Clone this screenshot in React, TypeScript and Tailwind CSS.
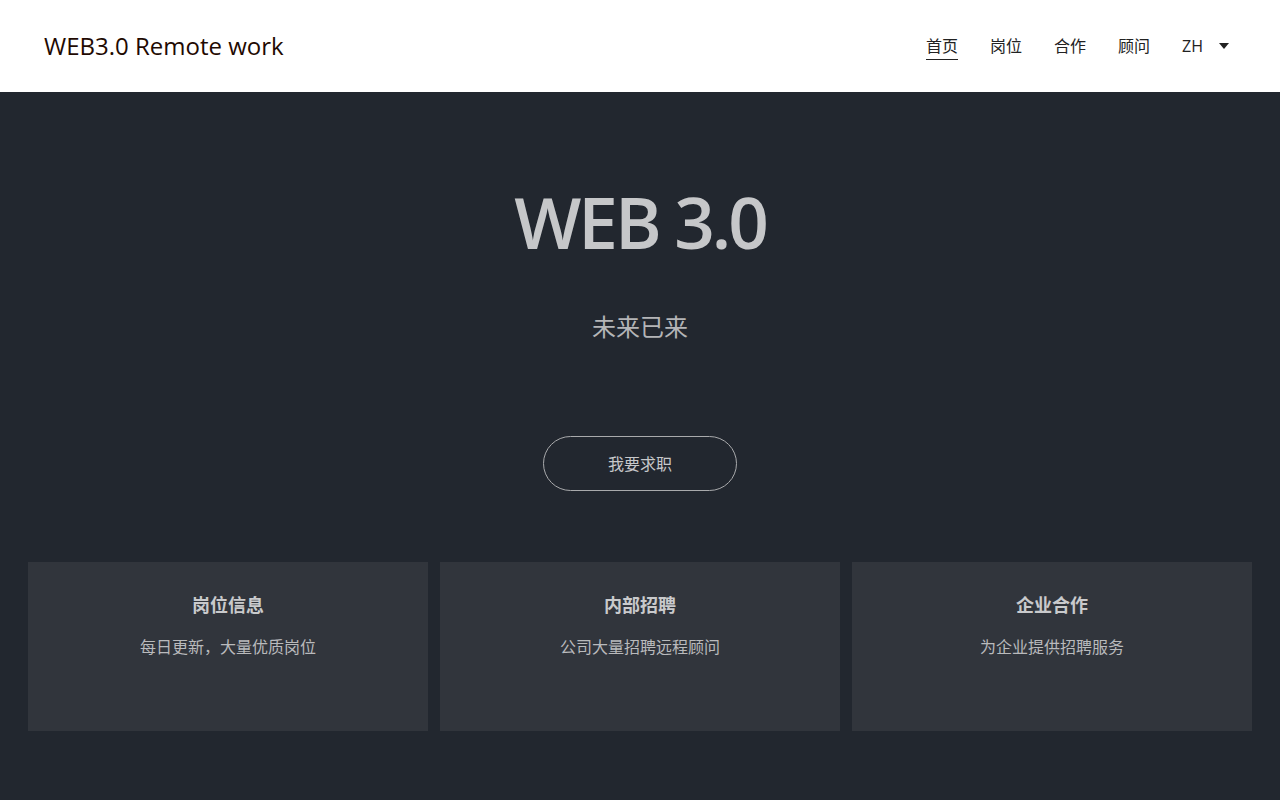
import React from 'react';

const navItems = ['首页', '岗位', '合作', '顾问'];

const cards = [
  { title: '岗位信息', desc: '每日更新，大量优质岗位' },
  { title: '内部招聘', desc: '公司大量招聘远程顾问' },
  { title: '企业合作', desc: '为企业提供招聘服务' },
];

const font = { fontFamily: '"Open Sans", "Noto Sans", "Noto Sans CJK SC", sans-serif' };

const Header = () => (
  <header className="h-[92px] bg-white flex items-center justify-between pl-[44px] pr-[51px]">
    <div className="text-[24px] text-[#1f0a02] leading-none">WEB3.0 Remote work</div>
    <nav className="flex items-center gap-8 text-[16px] text-[#222]">
      {navItems.map((item, i) => (
        <a key={item} className={`leading-none pb-[5px] border-b ${i === 0 ? 'border-[#222]' : 'border-transparent'} mt-[6px]`}>
          {item}
        </a>
      ))}
      <div className="flex items-center gap-[16px] leading-none pb-[5px] mt-[6px] border-b border-transparent">
        <span>ZH</span>
        <svg width="10" height="6" viewBox="0 0 10 6">
          <path d="M0 0h10L5 6z" fill="#222" />
        </svg>
      </div>
    </nav>
  </header>
);

const App = () => {
  return (
    <div className="min-h-[800px] bg-[#22272f] flex flex-col" style={font}>
      <Header />
      <main className="flex-1 flex flex-col items-center">
        <h1 className="mt-[94px] text-[71px] font-semibold leading-none text-[#c6c7c9] tracking-[-3px]">WEB 3.0</h1>
        <p className="mt-[58px] text-[24px] leading-none text-[#b4b5b7]">未来已来</p>
        <button className="mt-[97px] w-[194px] h-[55px] rounded-full border border-[#a9aaac] text-[16px] text-[#c7c8ca]">
          我要求职
        </button>
        <div className="mt-[71px] w-full px-[28px] grid grid-cols-3 gap-[12px]">
          {cards.map((c) => (
            <div key={c.title} className="h-[169px] bg-[#31353c] flex flex-col items-center pt-[34px]">
              <div className="text-[18px] font-bold text-[#c9cacc] leading-none">{c.title}</div>
              <div className="mt-[25px] text-[16px] text-[#b9babc] leading-none">{c.desc}</div>
            </div>
          ))}
        </div>
      </main>
    </div>
  );
};

export default App;
